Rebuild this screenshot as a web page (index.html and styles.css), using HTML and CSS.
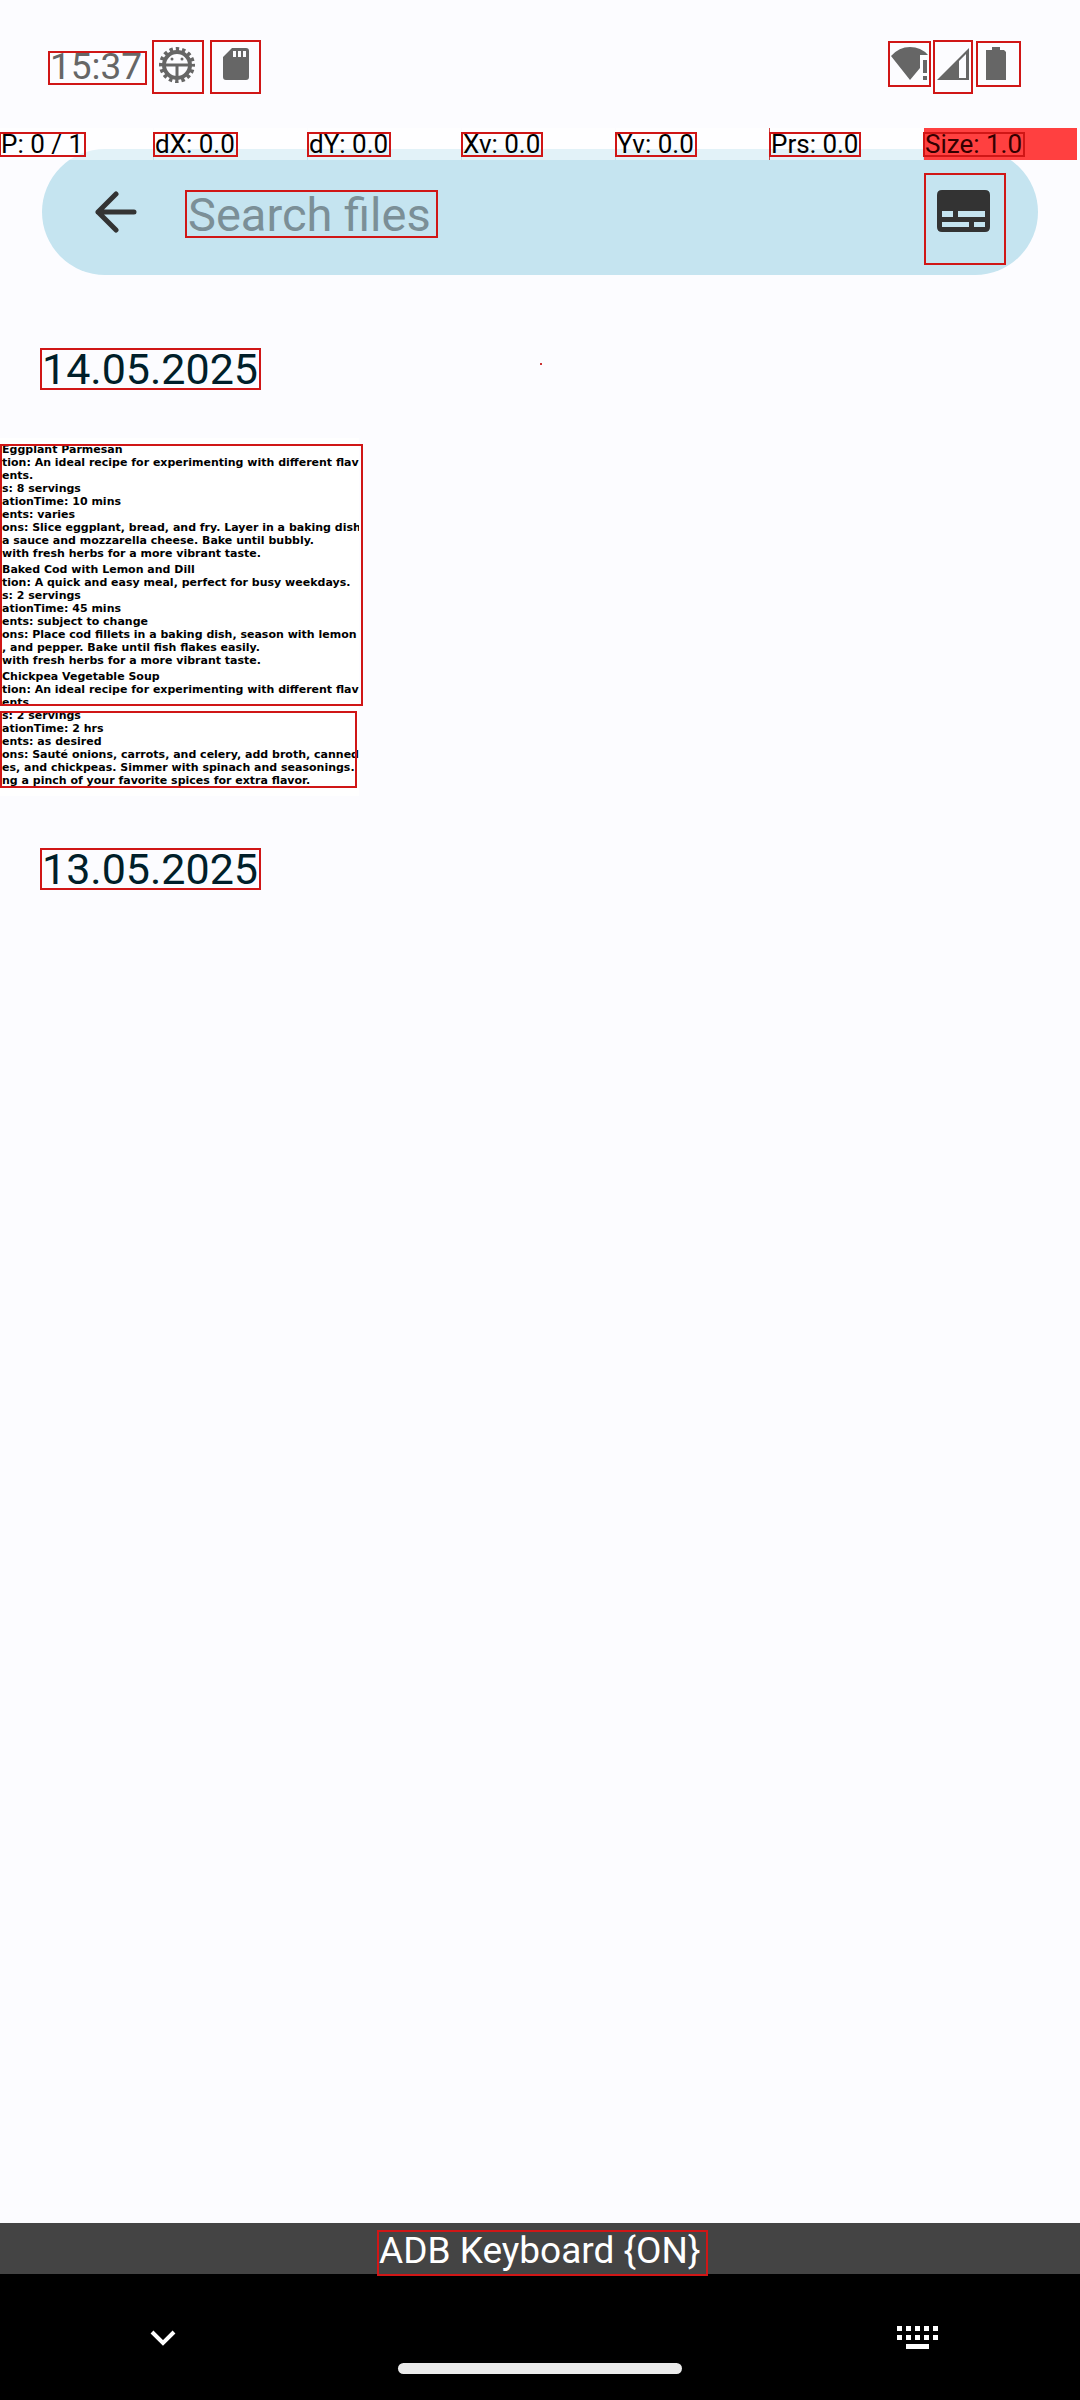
FILE: index.html
```html
<!DOCTYPE html>
<html lang="en">
<head>
<meta charset="utf-8">
<meta name="viewport" content="width=device-width, initial-scale=1">
<title>Search files</title>
<link rel="stylesheet" href="styles.css">
</head>
<body>
<header class="status">
  <time class="mark clock">15:37</time>
  <span class="mark status-icon debug">
    <svg width="38" height="38" viewBox="-19 -19 38 38" aria-hidden="true">
      <circle r="13" fill="none" stroke="#666" stroke-width="4"/>
      <circle r="16" fill="none" stroke="#666" stroke-width="4" stroke-dasharray="3.400 2.883" stroke-dashoffset="1.700"/>
      <path d="M-13 0H13M0 0V13" stroke="#666" stroke-width="3"/>
      <circle cx="-5" cy="-6" r="1.500" fill="#666"/><circle cx="5" cy="-6" r="1.500" fill="#666"/>
    </svg>
  </span>
  <span class="mark status-icon card">
    <svg width="26" height="32" viewBox="0 0 26 32" aria-hidden="true">
      <path fill="#666" fill-rule="evenodd" d="M9 0H23Q26 0 26 3V29Q26 32 23 32H3Q0 32 0 29V9ZM10 3V9H13V3ZM15 3V9H18V3ZM20 3V9H23V3Z"/>
    </svg>
  </span>
  <span class="mark status-icon wifi">
    <svg width="37" height="33" viewBox="0 0 37 33" aria-hidden="true">
      <path fill="#666" d="M0 9Q8 0 19 0Q30 0 37 8H29V21L19 33ZM32 13H36V26H32ZM32 29H36V33H32Z"/>
    </svg>
  </span>
  <span class="mark status-icon cell">
    <svg width="32" height="32" viewBox="0 0 32 32" aria-hidden="true">
      <path fill="#666" fill-rule="evenodd" d="M0 32L32 0V32ZM22 13V30H29V6Z"/>
    </svg>
  </span>
  <span class="mark status-icon battery">
    <svg width="20" height="33" viewBox="0 0 20 33" aria-hidden="true">
      <path fill="#666" d="M6 0H14V3H18L20 5V33H0V3H6Z"/>
    </svg>
  </span>
</header>

<div class="pointer">
  <div class="cell-p"><span class="mark">P: 0 / 1</span></div>
  <div class="cell-p"><span class="mark">dX: 0.0</span></div>
  <div class="cell-p"><span class="mark">dY: 0.0</span></div>
  <div class="cell-p"><span class="mark">Xv: 0.0</span></div>
  <div class="cell-p"><span class="mark">Yv: 0.0</span></div>
  <div class="cell-p pressure"><span class="mark">Prs: 0.0</span></div>
  <div class="cell-p size"><span class="mark">Size: 1.0</span></div>
</div>

<main class="content">
  <form class="search">
    <button class="back" type="button" aria-label="Back">
      <svg width="42" height="42" viewBox="0 0 42 42" aria-hidden="true">
        <path d="M21 3L3 21L21 39M3 21H39" fill="none" stroke="#333" stroke-width="5" stroke-linecap="round" stroke-linejoin="round"/>
      </svg>
    </button>
    <input class="mark query" type="text" placeholder="Search files" aria-label="Search files">
    <button class="mark captions" type="button" aria-label="Recognised text">
      <svg width="53" height="42" viewBox="0 0 53 42" aria-hidden="true">
        <path fill="#333" fill-rule="evenodd" d="M5 0H48Q53 0 53 5V37Q53 42 48 42H5Q0 42 0 37V5Q0 0 5 0ZM5 21V27H16V21ZM21 21V27H48V21ZM5 32V37H32V32ZM37 32V37H48V32Z"/>
      </svg>
    </button>
  </form>

  <section class="day">
    <div class="day-head"><h2 class="mark date">14.05.2025</h2><i class="dot"></i></div>
    <a class="thumb" href="#">
      <span class="page">
        <span class="recipe">Eggplant Parmesan<br>tion: An ideal recipe for experimenting with different flav<br>ents.<br>s: 8 servings<br>ationTime: 10 mins<br>ents: varies<br>ons: Slice eggplant, bread, and fry. Layer in a baking dish<br>a sauce and mozzarella cheese. Bake until bubbly.<br>with fresh herbs for a more vibrant taste.</span>
        <span class="recipe">Baked Cod with Lemon and Dill<br>tion: A quick and easy meal, perfect for busy weekdays.<br>s: 2 servings<br>ationTime: 45 mins<br>ents: subject to change<br>ons: Place cod fillets in a baking dish, season with lemon j<br>, and pepper. Bake until fish flakes easily.<br>with fresh herbs for a more vibrant taste.</span>
        <span class="recipe">Chickpea Vegetable Soup<br>tion: An ideal recipe for experimenting with different flav<br>ents.<br>s: 2 servings<br>ationTime: 2 hrs<br>ents: as desired<br>ons: Sauté onions, carrots, and celery, add broth, canned<br>es, and chickpeas. Simmer with spinach and seasonings.<br>ng a pinch of your favorite spices for extra flavor.</span>
      </span>
      <span class="mark region region-top"></span>
      <span class="mark region region-bottom"></span>
    </a>
  </section>

  <section class="day">
    <div class="day-head"><h2 class="mark date">13.05.2025</h2></div>
  </section>
</main>

<footer class="keyboard">
  <div class="keyboard-label"><span class="mark">ADB Keyboard {ON}</span></div>
  <nav class="nav">
    <button class="nav-button" type="button" aria-label="Hide keyboard">
      <svg width="26" height="16" viewBox="0 0 26 16" aria-hidden="true"><path d="M2 2L13 13L24 2" fill="none" stroke="#fff" stroke-width="4"/></svg>
    </button>
    <span class="handle"></span>
    <button class="nav-button" type="button" aria-label="Switch keyboard">
      <svg width="41" height="23" viewBox="0 0 41 23" aria-hidden="true"><path d="M0 2.500H41M0 11.500H41" stroke="#fff" stroke-width="5" stroke-dasharray="5 4"/><path d="M9 20.500H32" stroke="#fff" stroke-width="5"/></svg>
    </button>
  </nav>
</footer>
</body>
</html>
```
FILE: styles.css
```css
* { box-sizing: border-box; }

body {
  margin: 0;
  min-height: 100vh;
  display: flex;
  flex-direction: column;
  position: relative;
  background: #fcfcff;
  font-family: Roboto, sans-serif;
}

button { border: 0; padding: 0; background: none; }
svg { display: block; }

.mark { border: 2px solid #d01616; }

/* status bar */
.status {
  display: flex;
  align-items: flex-start;
  height: 128px;
  padding: 40px 59px 0 48px;
}
.clock {
  width: 99px;
  height: 34px;
  margin: 11px 5px 0 0;
  font-size: 37px;
  line-height: 28px;
  color: #666;
}
.status-icon {
  display: flex;
  justify-content: center;
  height: 54px;
  padding-top: 6px;
}
.debug { width: 52px; margin-right: 6px; padding: 4px 2px 0 0; }
.card { width: 51px; margin-right: auto; }
.wifi { width: 43px; height: 46px; margin: 1px 2px 0 0; padding-top: 4px; }
.cell { width: 40px; margin-right: 3px; }
.battery { width: 45px; height: 46px; margin-top: 1px; padding: 4px 6px 0 0; }

/* touch read-out, lies over the top of the search bar */
.pointer {
  position: absolute;
  top: 128px;
  left: 0;
  right: 3px;
  display: grid;
  grid-template-columns: repeat(7, 1fr);
  gap: 1px;
  font-size: 26px;
  line-height: 21px;
  color: #000;
}
.cell-p {
  display: flex;
  align-items: flex-start;
  height: 32px;
  padding-top: 4px;
  background: rgba(255, 255, 255, 0.5);
}
.cell-p .mark { margin-left: -1px; padding-right: 1px; white-space: nowrap; }
.pressure { box-shadow: -1px 0 #c44; }
.size { background: #ff4040; color: #300; }

/* search */
.content { flex: 1; }
.search {
  display: flex;
  align-items: flex-start;
  height: 126px;
  margin: 21px 42px 0;
  padding: 24px 32px 0 53px;
  border-radius: 63px;
  background: #c5e4f0;
}
.back { margin: 18px 48px 0 0; }
.query {
  width: 253px;
  height: 48px;
  margin: 17px auto 0 0;
  padding: 0 0 0 1px;
  border-radius: 0;
  background: none;
  font: 47px/44px Roboto, sans-serif;
  color: #333;
}
.query::placeholder { color: #7b8f97; opacity: 1; }
.captions {
  display: flex;
  justify-content: center;
  width: 82px;
  height: 92px;
  padding: 15px 4px 0 0;
}

/* files by day */
.day-head {
  display: flex;
  align-items: flex-start;
  height: 163px;
  padding: 73px 40px 0;
}
.date {
  width: 221px;
  height: 42px;
  margin: 0;
  font-size: 43px;
  font-weight: 400;
  line-height: 39px;
  color: #001f2a;
}
.dot { width: 2px; height: 2px; margin: 15px 0 0 279px; background: #c33; }
.thumb {
  display: block;
  position: relative;
  width: 359px;
  margin-bottom: -21px;
  color: #000;
  text-decoration: none;
}
.page {
  display: block;
  height: 358px;
  padding: 5px 0 0 2px;
  overflow: hidden;
  background: #fff;
  font: bold 11px/13px "DejaVu Sans", sans-serif;
  white-space: nowrap;
}
.recipe { display: block; margin-bottom: 3px; }
.region { position: absolute; left: 0; }
.region-top { top: 6px; width: 363px; height: 262px; }
.region-bottom { top: 273px; width: 357px; height: 77px; }

/* keyboard bar and gesture navigation */
.keyboard-label {
  display: flex;
  justify-content: center;
  height: 51px;
  padding: 7px 0 0 5px;
  background: #444;
  font-size: 37px;
  line-height: 38px;
  color: #fff;
}
.keyboard-label .mark { width: 331px; height: 46px; white-space: nowrap; }
.nav {
  display: flex;
  justify-content: space-between;
  align-items: flex-start;
  height: 126px;
  padding: 52px 142px 0 150px;
  background: #000;
}
.nav-button { padding-top: 4px; }
.nav-button:last-child { padding-top: 0; }
.handle {
  width: 284px;
  height: 11px;
  margin: 37px 0 0 7px;
  border-radius: 6px;
  background: #ebebeb;
}
```
